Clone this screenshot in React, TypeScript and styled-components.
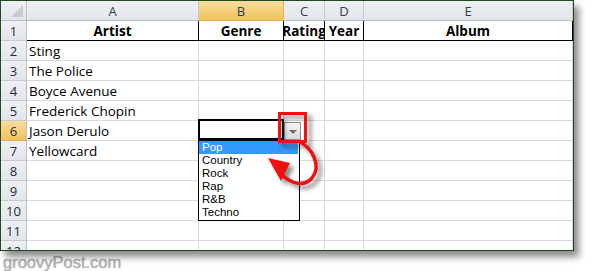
import React from 'react';
import styled, { createGlobalStyle, css } from 'styled-components';

const GlobalStyle = createGlobalStyle`
  html, body {
    margin: 0;
    padding: 0;
    background: #fff;
  }
  body {
    font-family: "Open Sans", "Liberation Sans", sans-serif;
  }
`;

const COLS = [26, 172, 85, 41, 39, 209];
const LETTERS = ['A', 'B', 'C', 'D', 'E'];
const SELECTED_COL = 1;
const SELECTED_ROW = 6;

const rows: string[][] = [
  ['Artist', 'Genre', 'Rating', 'Year', 'Album'],
  ['Sting', '', '', '', ''],
  ['The Police', '', '', '', ''],
  ['Boyce Avenue', '', '', '', ''],
  ['Frederick Chopin', '', '', '', ''],
  ['Jason Derulo', '', '', '', ''],
  ['Yellowcard', '', '', '', ''],
  ['', '', '', '', ''],
  ['', '', '', '', ''],
  ['', '', '', '', ''],
  ['', '', '', '', ''],
  ['', '', '', '', ''],
];

const options = ['Pop', 'Country', 'Rock', 'Rap', 'R&B', 'Techno'];

const Page = styled.div`
  position: relative;
  width: 594px;
  height: 271px;
  overflow: hidden;
`;

const Sheet = styled.div`
  position: relative;
  width: 572px;
  height: 249px;
  border: 1px solid #1f4a1f;
  box-shadow: 5px 6px 7px rgba(0, 0, 0, 0.45);
  background: #fff;
`;

const Grid = styled.div`
  display: grid;
  grid-template-columns: ${COLS.map((c) => `${c}px`).join(' ')};
  grid-auto-rows: 20px;
  height: 249px;
  overflow: hidden;
`;

const headerBg = css`
  background: linear-gradient(#eef0f3, #e2e5ea);
`;
const activeBg = css`
  background: linear-gradient(#f9dd9b, #f1c25d);
`;

const Corner = styled.div`
  ${headerBg};
  border-right: 1px solid #b9bec6;
  border-bottom: 1px solid #b9bec6;
  position: relative;
  &::after {
    content: '';
    position: absolute;
    right: 3px;
    bottom: 3px;
    border-left: 12px solid transparent;
    border-bottom: 12px solid #c8ccd2;
  }
`;

const ColHead = styled.div<{ $active?: boolean }>`
  ${(p) => (p.$active ? activeBg : headerBg)};
  border-right: 1px solid ${(p) => (p.$active ? '#e2b04c' : '#c4c9d0')};
  border-bottom: 1px solid ${(p) => (p.$active ? '#e2b04c' : '#b9bec6')};
  display: flex;
  align-items: center;
  justify-content: center;
  font-family: "Open Sans", sans-serif;
  font-size: 13px;
  color: #2b3f5c;
`;

const RowHead = styled.div<{ $active?: boolean }>`
  ${(p) => (p.$active ? activeBg : headerBg)};
  border-right: 1px solid #b9bec6;
  border-bottom: 1px solid ${(p) => (p.$active ? '#e2b04c' : '#c4c9d0')};
  display: flex;
  align-items: center;
  justify-content: center;
  font-family: "Open Sans", sans-serif;
  font-size: 13px;
  color: #1e2a3a;
`;

const Cell = styled.div<{ $bold?: boolean; $framed?: boolean }>`
  border-right: 1px solid ${(p) => (p.$framed ? '#000' : '#d9d9d9')};
  border-bottom: 1px solid ${(p) => (p.$framed ? '#000' : '#d9d9d9')};
  display: flex;
  align-items: center;
  justify-content: ${(p) => (p.$bold ? 'center' : 'flex-start')};
  padding: 0 2px;
  overflow: hidden;
  white-space: nowrap;
  font-family: "Open Sans", sans-serif;
  font-size: 13.5px;
  font-weight: ${(p) => (p.$bold ? 700 : 400)};
  color: #000;
`;

/* in-cell dropdown: lies over the grid at cell B6 */
const Dropdown = styled.div`
  position: absolute;
  left: 197px;
  top: 118px;
  z-index: 5;
`;

const SelectedBox = styled.div`
  width: 82px;
  height: 17px;
  border: 2px solid #000;
`;

const DropButton = styled.div`
  position: absolute;
  left: 86px;
  top: 3px;
  width: 15px;
  height: 16px;
  border: 1px solid #8e8e8e;
  background: linear-gradient(#f4f4f4, #dcdcdc);
  display: flex;
  align-items: center;
  justify-content: center;
  &::after {
    content: '';
    border-left: 4px solid transparent;
    border-right: 4px solid transparent;
    border-top: 4px solid #6d6d6d;
    margin-top: 1px;
  }
`;

const ListBox = styled.ul`
  position: absolute;
  left: 0;
  top: 21px;
  width: 100px;
  margin: 0;
  padding: 0 0 1px;
  list-style: none;
  background: #fff;
  border: 1px solid #000;
`;

const Option = styled.li<{ $hot?: boolean }>`
  height: 13px;
  line-height: 13px;
  padding-left: 3px;
  margin-right: 1px;
  font-family: "Liberation Sans", Arial, sans-serif;
  font-size: 11.5px;
  color: ${(p) => (p.$hot ? '#fff' : '#000')};
  background: ${(p) => (p.$hot ? '#3399ff' : 'transparent')};
`;

const Watermark = styled.div`
  margin: 2px 0 0 3px;
  font-family: "Liberation Sans", Arial, sans-serif;
  font-size: 16.5px;
  color: #b5b5b5;
  text-shadow: 0 0 1px #9a9a9a;
  line-height: 18px;
`;

const Annotation = styled.svg`
  position: absolute;
  left: 0;
  top: 0;
  pointer-events: none;
  z-index: 10;
`;

function Callout() {
  const curve = 'M300 142 C 312 148, 322 166, 312 178 C 304 187, 292 184, 282 175';
  const head = 'M268 158 L290 163 L281 181 Z';
  return (
    <Annotation width={594} height={271}>
      <defs>
        <filter id="sh" x="-50%" y="-50%" width="200%" height="200%">
          <feGaussianBlur stdDeviation="2" />
        </filter>
      </defs>
      <g transform="translate(4 4)" opacity="0.55" filter="url(#sh)">
        <rect x={279} y={113} width={27} height={29} fill="none" stroke="#333" strokeWidth={3} />
        <path d={curve} fill="none" stroke="#333" strokeWidth={3.5} />
        <path d={head} fill="#333" />
      </g>
      <rect x={279.5} y={113.5} width={26} height={28} fill="none" stroke="#f01010" strokeWidth={3} />
      <path d={curve} fill="none" stroke="#f01010" strokeWidth={3.5} strokeLinecap="round" />
      <path d={head} fill="#f01010" />
    </Annotation>
  );
}

export default function App() {
  return (
    <Page>
      <GlobalStyle />
      <Sheet>
        <Grid>
          <Corner />
          {LETTERS.map((l, i) => (
            <ColHead key={l} $active={i === SELECTED_COL}>
              {l}
            </ColHead>
          ))}
          {rows.map((row, r) => (
            <React.Fragment key={r}>
              <RowHead $active={r + 1 === SELECTED_ROW}>{r + 1}</RowHead>
              {row.map((text, c) => (
                <Cell key={c} $bold={r === 0} $framed={r === 0}>
                  {text}
                </Cell>
              ))}
            </React.Fragment>
          ))}
        </Grid>
        <Dropdown>
          <SelectedBox />
          <DropButton />
          <ListBox>
            {options.map((o, i) => (
              <Option key={o} $hot={i === 0}>
                {o}
              </Option>
            ))}
          </ListBox>
        </Dropdown>
      </Sheet>
      <Watermark>groovyPost.com</Watermark>
      <Callout />
    </Page>
  );
}
